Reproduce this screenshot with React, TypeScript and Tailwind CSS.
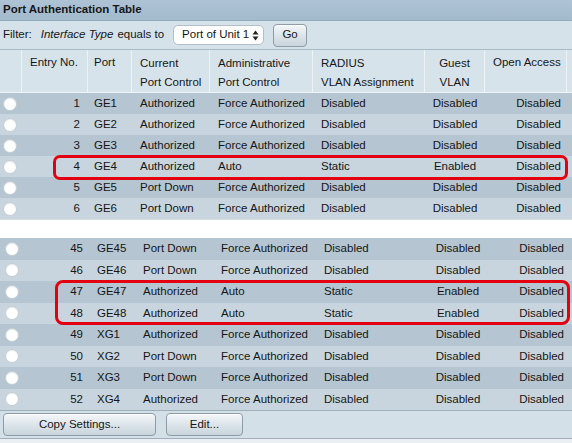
import React from 'react';

type Row = {
  entry: number;
  port: string;
  current: string;
  admin: string;
  radius: string;
  guest: string;
  open: string;
};

const mk = (entry: number, port: string, current: string, admin: string, radius: string, guest: string): Row => ({
  entry,
  port,
  current,
  admin,
  radius,
  guest,
  open: 'Disabled',
});

const topRows: Row[] = [
  mk(1, 'GE1', 'Authorized', 'Force Authorized', 'Disabled', 'Disabled'),
  mk(2, 'GE2', 'Authorized', 'Force Authorized', 'Disabled', 'Disabled'),
  mk(3, 'GE3', 'Authorized', 'Force Authorized', 'Disabled', 'Disabled'),
  mk(4, 'GE4', 'Authorized', 'Auto', 'Static', 'Enabled'),
  mk(5, 'GE5', 'Port Down', 'Force Authorized', 'Disabled', 'Disabled'),
  mk(6, 'GE6', 'Port Down', 'Force Authorized', 'Disabled', 'Disabled'),
];

const bottomRows: Row[] = [
  mk(45, 'GE45', 'Port Down', 'Force Authorized', 'Disabled', 'Disabled'),
  mk(46, 'GE46', 'Port Down', 'Force Authorized', 'Disabled', 'Disabled'),
  mk(47, 'GE47', 'Authorized', 'Auto', 'Static', 'Enabled'),
  mk(48, 'GE48', 'Authorized', 'Auto', 'Static', 'Enabled'),
  mk(49, 'XG1', 'Authorized', 'Force Authorized', 'Disabled', 'Disabled'),
  mk(50, 'XG2', 'Port Down', 'Force Authorized', 'Disabled', 'Disabled'),
  mk(51, 'XG3', 'Port Down', 'Force Authorized', 'Disabled', 'Disabled'),
  mk(52, 'XG4', 'Authorized', 'Force Authorized', 'Disabled', 'Disabled'),
];

const Radio: React.FC = () => (
  <span className="block w-[14px] h-[14px] rounded-full bg-white border border-[#c3cdd4] shadow-[inset_0_1px_1px_rgba(0,0,0,0.08)]" />
);

const TableRows: React.FC<{ rows: Row[]; first: string; rowH: string }> = ({ rows, first, rowH }) => (
  <>
    {rows.map((r, i) => (
      <div
        key={r.entry}
        className={`flex items-center ${rowH} ${i % 2 === 0 ? 'bg-[#b5c5d1]' : 'bg-[#c8d5de]'}`}
      >
        <div className={`${first} flex items-center pl-[3px]`}>
          <Radio />
        </div>
        <div className="w-[66px] text-right pr-[8px]">{r.entry}</div>
        <div className="w-[44px] pl-[6px]">{r.port}</div>
        <div className="w-[78px] pl-[8px]">{r.current}</div>
        <div className="w-[103px] pl-[8px] whitespace-nowrap">{r.admin}</div>
        <div className="w-[112px] pl-[8px]">{r.radius}</div>
        <div className="w-[60px] text-center">{r.guest}</div>
        <div className="w-[82px] text-right pr-[6px]">{r.open}</div>
      </div>
    ))}
  </>
);

const Btn: React.FC<{ children: React.ReactNode; className?: string }> = ({ children, className }) => (
  <div
    className={`h-[23px] flex items-center justify-center rounded-[4px] border border-[#8d9ca7] bg-gradient-to-b from-[#f4f7f9] via-[#dde5eb] to-[#c9d4dc] shadow-[inset_0_1px_0_#fff] ${className ?? ''}`}
  >
    {children}
  </div>
);

export default function App() {
  return (
    <div
      className="w-[572px] h-[443px] overflow-hidden bg-[#e9eff3] text-[11.5px] text-[#161616]"
      style={{ fontFamily: '"Liberation Sans", Arial, Helvetica, sans-serif' }}
    >
      {/* title */}
      <div className="h-[21px] flex items-center pl-[3px] font-bold text-[11.5px] bg-gradient-to-b from-[#aec4d5] to-[#a2bacd] border-b border-[#94abbd]">
        Port Authentication Table
      </div>

      {/* filter */}
      <div className="h-[28px] flex items-center pl-[3px] bg-[#d5e2ea]">
        <span>Filter:</span>
        <span className="ml-[9px] italic">Interface Type</span>
        <span className="ml-[4px]">equals to</span>
        <div className="ml-[9px] w-[91px] h-[20px] bg-white border border-[#b3bec6] rounded-[5px] flex items-center pl-[8px] pr-[4px] justify-between">
          <span>Port of Unit 1</span>
          <svg width="7" height="11" viewBox="0 0 7 11">
            <path d="M3.5 0.5 L6.5 4.5 L0.5 4.5 Z" fill="#222" />
            <path d="M3.5 10.5 L6.5 6.5 L0.5 6.5 Z" fill="#222" />
          </svg>
        </div>
        <Btn className="ml-[9px] w-[34px] h-[22px]">Go</Btn>
      </div>

      {/* header */}
      <div className="h-[44px] flex bg-[#d7e3eb] border-t border-[#a9bac7] border-b border-b-[#eef3f6]">
        <div className="w-[22px] border-r border-[#edf2f5]" />
        <div className="w-[66px] pl-[8px] pt-[4px] border-r border-[#edf2f5]">Entry No.</div>
        <div className="w-[44px] pl-[6px] pt-[4px] border-r border-[#edf2f5]">Port</div>
        <div className="w-[78px] pl-[8px] pt-[4px] leading-[19px] border-r border-[#edf2f5] whitespace-nowrap">
          Current<br />Port Control
        </div>
        <div className="w-[103px] pl-[8px] pt-[4px] leading-[19px] border-r border-[#edf2f5] whitespace-nowrap">
          Administrative<br />Port Control
        </div>
        <div className="w-[112px] pl-[8px] pt-[4px] leading-[19px] border-r border-[#edf2f5] whitespace-nowrap">
          RADIUS<br />VLAN Assignment
        </div>
        <div className="w-[60px] text-center pt-[4px] leading-[19px] border-r border-[#edf2f5]">
          Guest<br />VLAN
        </div>
        <div className="w-[82px] pl-[8px] pt-[4px] border-r border-[#edf2f5] whitespace-nowrap">Open Access</div>
      </div>

      {/* top rows */}
      <div className="relative">
        <TableRows rows={topRows} first="w-[22px]" rowH="h-[21px]" />
        <div className="absolute left-[53px] top-[62px] w-[515px] h-[25px] border-[3px] border-[#e3000f] rounded-[7px]" />
      </div>

      {/* break */}
      <div className="h-[19px] bg-white border-t border-[#d5dde3]" />

      {/* bottom rows */}
      <div className="relative">
        <TableRows rows={bottomRows} first="w-[25px] pl-[5px]" rowH="h-[21.5px]" />
        <div className="absolute left-[55px] top-[42px] w-[515px] h-[45px] border-[3px] border-[#e3000f] rounded-[8px]" />
      </div>

      {/* footer */}
      <div className="h-[29px] flex items-center gap-[10px] pl-[3px] bg-[#d3e0e8] border-t border-[#9fb0bc] border-b border-b-[#9fb0bc]">
        <Btn className="w-[153px]">Copy Settings...</Btn>
        <Btn className="w-[77px]">Edit...</Btn>
      </div>
    </div>
  );
}
